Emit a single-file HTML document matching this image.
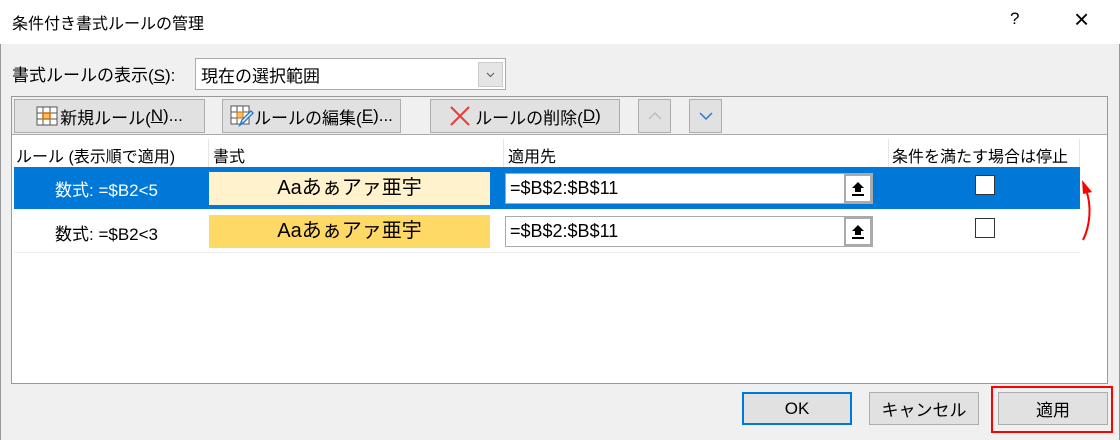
<!DOCTYPE html><html><head><meta charset="utf-8"><style>
*{margin:0;padding:0;box-sizing:border-box}
body{width:1120px;height:440px;background:#f0f0f0;font-family:"Liberation Sans","Noto Sans CJK JP",sans-serif;font-size:15px;color:#000;position:relative;overflow:hidden}
.a{position:absolute}
.btn{position:absolute;background:#e1e1e1;border:1px solid #adadad;display:flex;align-items:center;justify-content:center;font-size:17px}
.up{position:absolute;width:28px;height:29px;background:#fff;border:2px solid #aaa;display:flex;align-items:center;justify-content:center}
</style></head><body>
<div class="a" style="left:0;top:0;width:1120px;height:44px;background:#fff"></div>
<div class="a" style="left:12px;top:10px;font-size:16px">条件付き書式ルールの管理</div>
<div class="a" style="left:1010px;top:9px;font-size:17px">?</div>
<div class="a" style="left:1074px;top:4px;font-size:26px;font-weight:300">×</div>
<div class="a" style="left:0;top:44px;width:1px;height:396px;background:#999"></div>
<div class="a" style="left:1119px;top:44px;width:1px;height:396px;background:#999"></div>
<div class="a" style="left:12px;top:61px;font-size:17px">書式ルールの表示(<u>S</u>):</div>
<div class="a" style="left:195px;top:58px;width:311px;height:32px;background:#fff;border:1px solid #aaa"></div>
<div class="a" style="left:201px;top:62px;font-size:17px">現在の選択範囲</div>
<div class="a" style="left:478px;top:62px;width:25px;height:25px;background:#e5e5e5;border:1px solid #ccc"><svg width="23" height="23"><path d="M8 10L11.5 13.5L15 10" stroke="#555" fill="none"/></svg></div>
<div class="a" style="left:11px;top:96px;width:1097px;height:288px;border:1px solid #999;background:#fff"></div>
<div class="a" style="left:12px;top:97px;width:1095px;height:38px;background:#f0f0f0;border-bottom:1px solid #aaa"></div>
<div class="btn" style="left:14px;top:99px;width:191px;height:34px">
<svg width="22" height="20" style="margin-right:2px"><rect x="1" y="1" width="20" height="18" fill="#fff" stroke="#555"/><path d="M1 7H21M1 13H21M7 1V19M14 1V19" stroke="#555"/><rect x="7" y="7" width="7" height="6" fill="#f7c36b" stroke="#d86a00" stroke-width="1.5"/></svg>新規ルール(<u>N</u>)...</div>
<div class="btn" style="left:222px;top:99px;width:179px;height:34px">
<svg width="24" height="22"><rect x="1" y="1" width="18" height="18" fill="#fff" stroke="#555"/><path d="M1 7H19M1 13H19M7 1V19M13 1V19" stroke="#555"/><rect x="7" y="7" width="6" height="6" fill="#f7c36b" stroke="#d86a00"/><path d="M10 20L12 15L21 6L23 8L14 17Z" fill="#fff" stroke="#2a7ad2" stroke-width="1.5"/></svg>ルールの編集(<u>E</u>)...</div>
<div class="btn" style="left:430px;top:99px;width:190px;height:34px"><svg width="22" height="22" style="margin-right:4px"><path d="M2 2L20 20M20 2L2 20" stroke="#e83a3a" stroke-width="2"/></svg>ルールの削除(<u>D</u>)</div>
<div class="btn" style="left:638px;top:99px;width:33px;height:34px"><svg width="16" height="10"><path d="M2 8L8 2L14 8" stroke="#bbb" fill="none" stroke-width="1.3"/></svg></div>
<div class="btn" style="left:689px;top:99px;width:33px;height:34px"><svg width="16" height="10"><path d="M2 2L8 8L14 2" stroke="#2a7ad2" fill="none" stroke-width="1.5"/></svg></div>
<div class="a" style="left:16px;top:143px;font-size:16px">ルール (表示順で適用)</div>
<div class="a" style="left:208px;top:139px;width:1px;height:28px;background:#e5e5e5"></div>
<div class="a" style="left:213px;top:143px;font-size:16px">書式</div>
<div class="a" style="left:503px;top:139px;width:1px;height:28px;background:#e5e5e5"></div>
<div class="a" style="left:508px;top:143px;font-size:16px">適用先</div>
<div class="a" style="left:888px;top:139px;width:1px;height:28px;background:#e5e5e5"></div>
<div class="a" style="left:892px;top:143px;font-size:16px">条件を満たす場合は停止</div>
<div class="a" style="left:1079px;top:139px;width:1px;height:28px;background:#e5e5e5"></div>
<div class="a" style="left:14px;top:167px;width:1066px;height:42px;background:#0078d7"></div>
<div class="a" style="left:55px;top:176px;font-size:17px;color:#fff">数式: =$B2&lt;5</div>
<div class="a" style="left:209px;top:172px;width:281px;height:33px;background:#fff2cc;text-align:center;line-height:33px;font-size:20px">Aaあぁアァ亜宇</div>
<div class="a" style="left:55px;top:220px;font-size:17px">数式: =$B2&lt;3</div>
<div class="a" style="left:209px;top:215px;width:281px;height:33px;background:#ffd966;text-align:center;line-height:33px;font-size:20px">Aaあぁアァ亜宇</div>
<div class="a" style="left:505px;top:173px;width:368px;height:31px;background:#fff;border:1px solid #aaa;font-size:18px;line-height:29px;padding-left:4px">=$B$2:$B$11</div>
<div class="up" style="left:844px;top:174px"><svg width="14" height="16"><path d="M7 1L1 7H4V11H10V7H13Z" fill="#000"/><rect x="1" y="13" width="12" height="2" fill="#000"/></svg></div>
<div class="a" style="left:505px;top:216px;width:368px;height:31px;background:#fff;border:1px solid #aaa;font-size:18px;line-height:29px;padding-left:4px">=$B$2:$B$11</div>
<div class="up" style="left:844px;top:217px"><svg width="14" height="16"><path d="M7 1L1 7H4V11H10V7H13Z" fill="#000"/><rect x="1" y="13" width="12" height="2" fill="#000"/></svg></div>
<div class="a" style="left:975px;top:175px;width:20px;height:20px;background:#fff;border:1px solid #333"></div>
<div class="a" style="left:975px;top:218px;width:20px;height:20px;background:#fff;border:1px solid #333"></div>
<div class="a" style="left:14px;top:252px;width:1066px;height:1px;background:#eee"></div>
<svg class="a" style="left:1078px;top:178px" width="24" height="66"><path d="M5 62C12 48 14 28 8 12" stroke="#f00" stroke-width="2" fill="none"/><path d="M4 2L14 14L5 16Z" fill="#f00"/></svg>
<div class="btn" style="left:742px;top:392px;width:110px;height:33px;border:2px solid #0078d7">OK</div>
<div class="btn" style="left:869px;top:392px;width:110px;height:33px">キャンセル</div>
<div class="a" style="left:991px;top:386px;width:122px;height:47px;border:2px solid #f00"></div>
<div class="btn" style="left:998px;top:392px;width:110px;height:33px">適用</div>
</body></html>
